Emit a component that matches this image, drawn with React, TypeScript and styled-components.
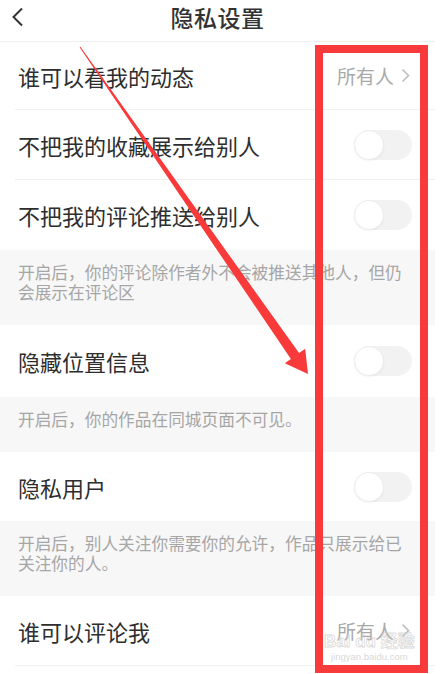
import React from 'react';
import styled, {createGlobalStyle} from 'styled-components';

const GlobalStyle = createGlobalStyle`
  body {
    margin: 0;
    background: #ffffff;
    font-family: "Noto Sans CJK SC", "Noto Sans", sans-serif;
  }
`;

const Page = styled.div`
  position: relative;
  width: 435px;
  min-height: 674px;
  background: #ffffff;
  overflow: hidden;
`;

const Header = styled.header`
  display: grid;
  grid-template-columns: 1fr auto 1fr;
  align-items: center;
  height: 42px;
  padding-bottom: 8px;
  box-sizing: border-box;
  border-bottom: 1px solid #efefef;
`;

const BackButton = styled.button`
  justify-self: start;
  display: flex;
  align-items: center;
  padding: 0 0 0 11px;
  border: none;
  background: none;
`;

const Title = styled.h1`
  margin: 0;
  font-size: 23px;
  font-weight: 500;
  color: #333333;
  letter-spacing: 0.5px;
`;

const Row = styled.div<{$h?: number; $line?: boolean}>`
  display: flex;
  align-items: center;
  justify-content: space-between;
  height: ${({$h}) => $h ?? 70}px;
  margin-left: 15px;
  padding: 0 23px 0 3px;
  box-sizing: border-box;
  border-bottom: ${({$line}) => ($line ? '1px solid #f0f0f0' : 'none')};
`;

const Label = styled.span`
  font-size: 22px;
  color: #2e2e2e;
`;

const Value = styled.span`
  display: flex;
  align-items: center;
  gap: 7px;
  font-size: 19px;
  color: #a9a9a9;
  margin-right: 2px;
`;

const Track = styled.span`
  position: relative;
  display: block;
  width: 58px;
  height: 30px;
  border-radius: 15px;
  background: #f2f2f2;
`;

const Knob = styled.span`
  position: absolute;
  left: 0;
  top: 0;
  width: 30px;
  height: 30px;
  border-radius: 50%;
  background: #ffffff;
  box-sizing: border-box;
  border: 1px solid #eeeeee;
  box-shadow: 0 1px 2px rgba(0, 0, 0, 0.05);
`;

const Hint = styled.p`
  margin: 0;
  padding: 12px 24px 23px 18px;
  background: #f7f7f7;
  font-size: 16.7px;
  line-height: 20px;
  color: #a6a6a6;
`;

const Overlay = styled.svg`
  position: absolute;
  left: 0;
  top: 0;
  pointer-events: none;
`;

const Watermark = styled.div`
  position: absolute;
  left: 324px;
  top: 632px;
  display: flex;
  flex-direction: column;
  align-items: center;
  pointer-events: none;
  color: transparent;
  -webkit-text-stroke: 0.8px rgba(205, 205, 205, 0.75);
  font-family: "Liberation Sans", "Noto Sans CJK SC", sans-serif;
  font-weight: 700;
  font-size: 17px;
  line-height: 19px;

  & > small {
    font-size: 9.5px;
    line-height: 11px;
    font-weight: 400;
    -webkit-text-stroke: 0;
    color: rgba(205, 205, 205, 0.8);
  }
`;

function Toggle() {
  return (
    <Track>
      <Knob />
    </Track>
  );
}

function Chevron() {
  return (
    <svg width="9" height="15" viewBox="0 0 9 15">
      <path d="M1.5 1.5 L7.5 7.5 L1.5 13.5" fill="none" stroke="#bbbbbb" strokeWidth="1.5" />
    </svg>
  );
}

export default function App() {
  return (
    <Page>
      <GlobalStyle />
      <Header>
        <BackButton>
          <svg width="14" height="20" viewBox="0 0 14 20">
            <path d="M11 1.5 L2.5 10 L11 18.5" fill="none" stroke="#333333" strokeWidth="2" />
          </svg>
        </BackButton>
        <Title>隐私设置</Title>
        <span />
      </Header>

      <Row $h={68} $line>
        <Label>谁可以看我的动态</Label>
        <Value>
          所有人
          <Chevron />
        </Value>
      </Row>
      <Row $line>
        <Label>不把我的收藏展示给别人</Label>
        <Toggle />
      </Row>
      <Row>
        <Label>不把我的评论推送给别人</Label>
        <Toggle />
      </Row>
      <Hint>开启后，你的评论除作者外不会被推送其他人，但仍会展示在评论区</Hint>
      <Row $h={72}>
        <Label>隐藏位置信息</Label>
        <Toggle />
      </Row>
      <Hint>开启后，你的作品在同城页面不可见。</Hint>
      <Row $h={69}>
        <Label>隐私用户</Label>
        <Toggle />
      </Row>
      <Hint>开启后，别人关注你需要你的允许，作品只展示给已关注你的人。</Hint>
      <Row $h={70} $line>
        <Label>谁可以评论我</Label>
        <Value>
          所有人
          <Chevron />
        </Value>
      </Row>

      <Watermark>
        <span>Bai du 经验</span>
        <small>jingyan.baidu.com</small>
      </Watermark>

      <Overlay width="441" height="674" viewBox="0 0 441 674">
        <rect x="319" y="49" width="105" height="620" fill="none" stroke="#f93a3a" strokeWidth="8" />
        <polygon
          points="80.4,46.7 299.1,353.1 305.2,348.8 308,374 284.8,363.2 290.9,358.9 79.6,47.3"
          fill="#f93a3a"
        />
      </Overlay>
    </Page>
  );
}
